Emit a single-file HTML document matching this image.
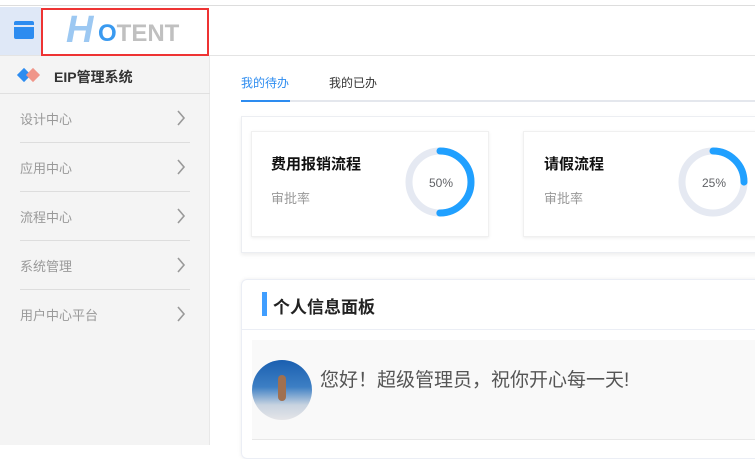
<!DOCTYPE html><html><head><meta charset="utf-8"><style>
*{margin:0;padding:0;box-sizing:border-box}
body{width:755px;height:445px;overflow:hidden;background:#fff;font-family:"Liberation Sans","Noto Sans CJK SC",sans-serif;position:relative}
.a{position:absolute}
</style></head><body>
<div class="a" style="left:0;top:0;width:755px;height:6px;background:#fff;border-bottom:1px solid #ddd"></div>
<div class="a" style="left:0;top:7px;width:41px;height:48px;background:#dfe8f7"></div>
<div class="a" style="left:14px;top:21px;width:20px;height:18px;background:#2d8cf0;border-radius:2px"></div>
<div class="a" style="left:14px;top:25px;width:20px;height:2px;background:#dfe8f7"></div>
<div class="a" style="left:0;top:55px;width:755px;height:1px;background:#e4e4e4"></div>
<div class="a" style="left:41px;top:8px;width:168px;height:48px;border:2px solid #e33"></div>
<div class="a" style="left:66px;top:9px;font:bold 38px 'Liberation Sans',sans-serif;color:#9cc8f2;font-style:italic">H</div>
<div class="a" style="left:98px;top:20px;font:bold 24px 'Liberation Sans',sans-serif;color:#c0c0c0"><span style="color:#3a9af0">O</span>TENT</div>
<div class="a" style="left:0;top:56px;width:210px;height:389px;background:#f4f4f4;border-right:1px solid #e8e8e8"></div>
<div class="a" style="left:19px;top:70px;width:10px;height:10px;background:#2d8cf0;transform:rotate(45deg)"></div>
<div class="a" style="left:28px;top:70px;width:10px;height:10px;background:#f0968a;transform:rotate(45deg)"></div>
<div class="a" style="left:54px;top:67px;font:bold 14px 'Liberation Sans','Noto Sans CJK SC',sans-serif;color:#333">EIP管理系统</div>
<div class="a" style="left:0;top:93px;width:210px;height:1px;background:#e0e0e0"></div>
<div class="a" style="left:20px;top:109px;width:170px;font-size:13px;color:#999">
<div style="position:absolute;top:0">设计中心</div><div style="position:absolute;top:49px">应用中心</div><div style="position:absolute;top:98px">流程中心</div><div style="position:absolute;top:147px">系统管理</div><div style="position:absolute;top:196px">用户中心平台</div>
</div>
<div class="a" style="left:20px;top:142px;width:170px;height:1px;background:#ddd"></div>
<div class="a" style="left:20px;top:191px;width:170px;height:1px;background:#ddd"></div>
<div class="a" style="left:20px;top:240px;width:170px;height:1px;background:#ddd"></div>
<div class="a" style="left:20px;top:289px;width:170px;height:1px;background:#ddd"></div>
<svg class="a" style="left:176px;top:110px" width="12" height="220"><g fill="none" stroke="#999" stroke-width="1.6"><path d="M2 1l6 7-6 7"/><path d="M2 50l6 7-6 7"/><path d="M2 99l6 7-6 7"/><path d="M2 148l6 7-6 7"/><path d="M2 197l6 7-6 7"/></g></svg>
<div class="a" style="left:241px;top:74px;font-size:12px;color:#2d8cf0">我的待办</div>
<div class="a" style="left:329px;top:74px;font-size:12px;color:#333">我的已办</div>
<div class="a" style="left:241px;top:100px;width:514px;height:2px;background:#e4e7ed"></div>
<div class="a" style="left:241px;top:100px;width:49px;height:2px;background:#2d8cf0"></div>
<div class="a" style="left:241px;top:116px;width:520px;height:137px;border:1px solid #eceef2;box-shadow:0 2px 4px #eee"></div>
<div class="a" style="left:251px;top:131px;width:238px;height:106px;border:1px solid #f0f0f0;box-shadow:0 1px 3px #eee"></div>
<div class="a" style="left:523px;top:131px;width:240px;height:106px;border:1px solid #f0f0f0;box-shadow:0 1px 3px #eee"></div>
<div class="a" style="left:271px;top:153px;font:bold 15px 'Liberation Sans','Noto Sans CJK SC',sans-serif;color:#111">费用报销流程</div>
<div class="a" style="left:271px;top:188px;font-size:13px;color:#999">审批率</div>
<div class="a" style="left:544px;top:153px;font:bold 15px 'Liberation Sans','Noto Sans CJK SC',sans-serif;color:#111">请假流程</div>
<div class="a" style="left:544px;top:188px;font-size:13px;color:#999">审批率</div>
<svg class="a" style="left:400px;top:142px" width="360" height="80">
<circle cx="40" cy="40" r="31" fill="none" stroke="#e5e9f2" stroke-width="7"/>
<circle cx="40" cy="40" r="31" fill="none" stroke="#20a0ff" stroke-width="7" stroke-linecap="round" stroke-dasharray="97.4 200" transform="rotate(-90 40 40)"/>
<circle cx="313" cy="40" r="31" fill="none" stroke="#e5e9f2" stroke-width="7"/>
<circle cx="313" cy="40" r="31" fill="none" stroke="#20a0ff" stroke-width="7" stroke-linecap="round" stroke-dasharray="48.7 200" transform="rotate(-90 313 40)"/>
<text x="41" y="45" text-anchor="middle" font-size="12" fill="#606266" font-family="Liberation Sans">50%</text>
<text x="314" y="45" text-anchor="middle" font-size="12" fill="#606266" font-family="Liberation Sans">25%</text>
</svg>
<div class="a" style="left:241px;top:279px;width:530px;height:180px;border:1px solid #ebeef5;border-radius:6px;box-shadow:0 0 4px #eee"></div>
<div class="a" style="left:262px;top:292px;width:5px;height:24px;background:#409eff"></div>
<div class="a" style="left:273px;top:293px;font:bold 17px 'Liberation Sans','Noto Sans CJK SC',sans-serif;color:#222">个人信息面板</div>
<div class="a" style="left:242px;top:329px;width:513px;height:1px;background:#ebeef5"></div>
<div class="a" style="left:252px;top:340px;width:503px;height:100px;background:#f9f9f9;border-bottom:1px solid #e8e8e8"></div>
<div class="a" style="left:252px;top:360px;width:60px;height:60px;border-radius:50%;background:linear-gradient(180deg,#1a5fb0 0%,#3d7fc4 45%,#c8d3e0 75%,#e5e5e8 100%)"></div>
<div class="a" style="left:278px;top:375px;width:8px;height:26px;border-radius:4px;background:#a07050"></div>
<div class="a" style="left:320px;top:365px;font-size:19px;color:#555">您好！超级管理员，祝你开心每一天!</div>
</body></html>
